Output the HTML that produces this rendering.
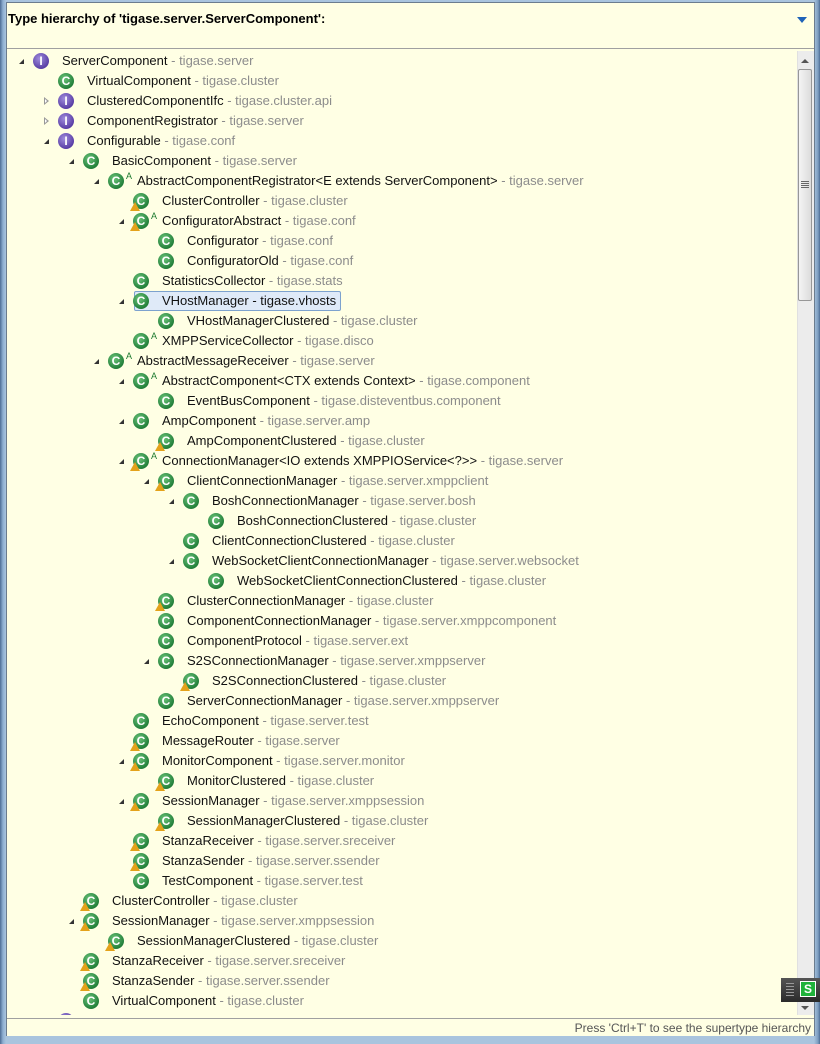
<!DOCTYPE html>
<html><head><meta charset="utf-8"><style>
*{margin:0;padding:0;box-sizing:border-box}
body{width:820px;height:1044px;overflow:hidden;background:#6f8aa8;font-family:"Liberation Sans","DejaVu Sans",sans-serif;position:relative}
#win{position:absolute;left:0;top:0;width:820px;height:1044px;background:linear-gradient(90deg,#4d6d95,#8fb0d2 3px,#a9c4de 6px,#a9c4de 814px,#7d9dc0 818px,#4d6d95);}
#inner{position:absolute;left:6px;top:2px;width:809px;height:1034px;background:#ffffe4;border:1px solid #6b7c8e}
#hdr{position:absolute;left:0;top:0;width:807px;height:46px;border-bottom:1px solid #a0a0a0}
#hdr b{position:absolute;left:1px;top:8px;font-size:13px;color:#000}
#tri{position:absolute;left:790px;top:14px;width:0;height:0;border-left:5px solid transparent;border-right:5px solid transparent;border-top:6px solid #1f63b8}
#status{position:absolute;left:0;top:1015px;width:807px;height:18px;border-top:1px solid #a0a0a0;font-size:12px;color:#555;text-align:right;padding-right:3px;line-height:18px}
#sb{position:absolute;left:797px;top:51px;width:17px;height:964px;background:#ececec;border-left:1px solid #e0e0e0}
#thumb{position:absolute;left:798px;top:69px;width:14px;height:232px;background:linear-gradient(90deg,#f4f4f4,#dcdcdc);border:1px solid #979797;border-radius:2px}
.grip{position:absolute;left:801px;width:8px;height:1px;background:#666}
.up{position:absolute;left:801px;top:59px;border-left:4px solid transparent;border-right:4px solid transparent;border-bottom:4px solid #555}
.dn{position:absolute;left:801px;top:1006px;border-left:4px solid transparent;border-right:4px solid transparent;border-top:4px solid #555}
#tree{position:absolute;left:0;top:1px;width:797px;height:1014px;overflow:hidden}
.r{position:absolute;height:20px;font-size:13px;line-height:20px;white-space:nowrap;color:#111}
.r .t{position:absolute;left:62px;top:0}
.r .p{color:#8c8c8c}
.ic{position:absolute;left:33px;top:2px;width:16px;height:16px;border-radius:50%;color:#fff;font:bold 12px/16px "Liberation Sans",sans-serif;text-align:center}
.c{background:radial-gradient(circle at 40% 35%,#6cc47a,#23803a 70%)}
.c::after{content:"C"}
.i{background:radial-gradient(circle at 40% 35%,#a08ddc,#5a3fa6 70%)}
.i::after{content:"I"}
.w{position:absolute;left:30px;top:11px;width:0;height:0;border-left:5px solid transparent;border-right:5px solid transparent;border-bottom:9px solid #e4a21a}
.a{position:absolute;left:51px;top:-5px;font-size:9px;color:#1d7a2f}
.o{position:absolute;left:19px;top:8px;width:0;height:0;border-left:5px solid transparent;border-bottom:5px solid #333}
.cl{position:absolute;left:19px;top:6px;width:0;height:0;border-top:4px solid transparent;border-bottom:4px solid transparent;border-left:5px solid #999}
.cl::after{content:"";position:absolute;left:-4px;top:-2px;border-top:2px solid transparent;border-bottom:2px solid transparent;border-left:2px solid #fff}
#sel{position:absolute;left:134px;top:290px;width:207px;height:20px;background:#dfeaf8;border:1px solid #7da2ce;border-radius:2px}
#fw{position:absolute;left:781px;top:978px;width:39px;height:24px;background:linear-gradient(#555,#2a2a2a)}
#fw .s{position:absolute;left:19px;top:3px;width:16px;height:16px;background:#1fb23a;border:1px solid #fff;color:#fff;font:bold 12px/14px "Liberation Sans",sans-serif;text-align:center}
#fw .d{position:absolute;left:5px;top:5px;width:8px;height:13px;background:repeating-linear-gradient(#999 0 1px,transparent 1px 3px)}
</style></head><body>
<div id="win"></div>
<div id="inner">
<div id="hdr"><b>Type hierarchy of 'tigase.server.ServerComponent':</b><div id="tri"></div></div>
</div>
<div id="tree">
<div id="sel"></div>
<div class="r" style="top:50px;left:0"><span class="o"></span><span class="ic i"></span><span class="t">ServerComponent <span class="p">- tigase.server</span></span></div>
<div class="r" style="top:70px;left:25px"><span class="ic c"></span><span class="t">VirtualComponent <span class="p">- tigase.cluster</span></span></div>
<div class="r" style="top:90px;left:25px"><span class="cl"></span><span class="ic i"></span><span class="t">ClusteredComponentIfc <span class="p">- tigase.cluster.api</span></span></div>
<div class="r" style="top:110px;left:25px"><span class="cl"></span><span class="ic i"></span><span class="t">ComponentRegistrator <span class="p">- tigase.server</span></span></div>
<div class="r" style="top:130px;left:25px"><span class="o"></span><span class="ic i"></span><span class="t">Configurable <span class="p">- tigase.conf</span></span></div>
<div class="r" style="top:150px;left:50px"><span class="o"></span><span class="ic c"></span><span class="t">BasicComponent <span class="p">- tigase.server</span></span></div>
<div class="r" style="top:170px;left:75px"><span class="o"></span><span class="ic c"></span><span class="a">A</span><span class="t">AbstractComponentRegistrator&lt;E extends ServerComponent&gt; <span class="p">- tigase.server</span></span></div>
<div class="r" style="top:190px;left:100px"><span class="ic c"></span><span class="w"></span><span class="t">ClusterController <span class="p">- tigase.cluster</span></span></div>
<div class="r" style="top:210px;left:100px"><span class="o"></span><span class="ic c"></span><span class="w"></span><span class="a">A</span><span class="t">ConfiguratorAbstract <span class="p">- tigase.conf</span></span></div>
<div class="r" style="top:230px;left:125px"><span class="ic c"></span><span class="t">Configurator <span class="p">- tigase.conf</span></span></div>
<div class="r" style="top:250px;left:125px"><span class="ic c"></span><span class="t">ConfiguratorOld <span class="p">- tigase.conf</span></span></div>
<div class="r" style="top:270px;left:100px"><span class="ic c"></span><span class="t">StatisticsCollector <span class="p">- tigase.stats</span></span></div>
<div class="r" style="top:290px;left:100px"><span class="o"></span><span class="ic c"></span><span class="t">VHostManager - tigase.vhosts</span></div>
<div class="r" style="top:310px;left:125px"><span class="ic c"></span><span class="t">VHostManagerClustered <span class="p">- tigase.cluster</span></span></div>
<div class="r" style="top:330px;left:100px"><span class="ic c"></span><span class="a">A</span><span class="t">XMPPServiceCollector <span class="p">- tigase.disco</span></span></div>
<div class="r" style="top:350px;left:75px"><span class="o"></span><span class="ic c"></span><span class="a">A</span><span class="t">AbstractMessageReceiver <span class="p">- tigase.server</span></span></div>
<div class="r" style="top:370px;left:100px"><span class="o"></span><span class="ic c"></span><span class="a">A</span><span class="t">AbstractComponent&lt;CTX extends Context&gt; <span class="p">- tigase.component</span></span></div>
<div class="r" style="top:390px;left:125px"><span class="ic c"></span><span class="t">EventBusComponent <span class="p">- tigase.disteventbus.component</span></span></div>
<div class="r" style="top:410px;left:100px"><span class="o"></span><span class="ic c"></span><span class="t">AmpComponent <span class="p">- tigase.server.amp</span></span></div>
<div class="r" style="top:430px;left:125px"><span class="ic c"></span><span class="w"></span><span class="t">AmpComponentClustered <span class="p">- tigase.cluster</span></span></div>
<div class="r" style="top:450px;left:100px"><span class="o"></span><span class="ic c"></span><span class="w"></span><span class="a">A</span><span class="t">ConnectionManager&lt;IO extends XMPPIOService&lt;?&gt;&gt; <span class="p">- tigase.server</span></span></div>
<div class="r" style="top:470px;left:125px"><span class="o"></span><span class="ic c"></span><span class="w"></span><span class="t">ClientConnectionManager <span class="p">- tigase.server.xmppclient</span></span></div>
<div class="r" style="top:490px;left:150px"><span class="o"></span><span class="ic c"></span><span class="t">BoshConnectionManager <span class="p">- tigase.server.bosh</span></span></div>
<div class="r" style="top:510px;left:175px"><span class="ic c"></span><span class="t">BoshConnectionClustered <span class="p">- tigase.cluster</span></span></div>
<div class="r" style="top:530px;left:150px"><span class="ic c"></span><span class="t">ClientConnectionClustered <span class="p">- tigase.cluster</span></span></div>
<div class="r" style="top:550px;left:150px"><span class="o"></span><span class="ic c"></span><span class="t">WebSocketClientConnectionManager <span class="p">- tigase.server.websocket</span></span></div>
<div class="r" style="top:570px;left:175px"><span class="ic c"></span><span class="t">WebSocketClientConnectionClustered <span class="p">- tigase.cluster</span></span></div>
<div class="r" style="top:590px;left:125px"><span class="ic c"></span><span class="w"></span><span class="t">ClusterConnectionManager <span class="p">- tigase.cluster</span></span></div>
<div class="r" style="top:610px;left:125px"><span class="ic c"></span><span class="t">ComponentConnectionManager <span class="p">- tigase.server.xmppcomponent</span></span></div>
<div class="r" style="top:630px;left:125px"><span class="ic c"></span><span class="t">ComponentProtocol <span class="p">- tigase.server.ext</span></span></div>
<div class="r" style="top:650px;left:125px"><span class="o"></span><span class="ic c"></span><span class="t">S2SConnectionManager <span class="p">- tigase.server.xmppserver</span></span></div>
<div class="r" style="top:670px;left:150px"><span class="ic c"></span><span class="w"></span><span class="t">S2SConnectionClustered <span class="p">- tigase.cluster</span></span></div>
<div class="r" style="top:690px;left:125px"><span class="ic c"></span><span class="t">ServerConnectionManager <span class="p">- tigase.server.xmppserver</span></span></div>
<div class="r" style="top:710px;left:100px"><span class="ic c"></span><span class="t">EchoComponent <span class="p">- tigase.server.test</span></span></div>
<div class="r" style="top:730px;left:100px"><span class="ic c"></span><span class="w"></span><span class="t">MessageRouter <span class="p">- tigase.server</span></span></div>
<div class="r" style="top:750px;left:100px"><span class="o"></span><span class="ic c"></span><span class="w"></span><span class="t">MonitorComponent <span class="p">- tigase.server.monitor</span></span></div>
<div class="r" style="top:770px;left:125px"><span class="ic c"></span><span class="w"></span><span class="t">MonitorClustered <span class="p">- tigase.cluster</span></span></div>
<div class="r" style="top:790px;left:100px"><span class="o"></span><span class="ic c"></span><span class="w"></span><span class="t">SessionManager <span class="p">- tigase.server.xmppsession</span></span></div>
<div class="r" style="top:810px;left:125px"><span class="ic c"></span><span class="w"></span><span class="t">SessionManagerClustered <span class="p">- tigase.cluster</span></span></div>
<div class="r" style="top:830px;left:100px"><span class="ic c"></span><span class="w"></span><span class="t">StanzaReceiver <span class="p">- tigase.server.sreceiver</span></span></div>
<div class="r" style="top:850px;left:100px"><span class="ic c"></span><span class="w"></span><span class="t">StanzaSender <span class="p">- tigase.server.ssender</span></span></div>
<div class="r" style="top:870px;left:100px"><span class="ic c"></span><span class="t">TestComponent <span class="p">- tigase.server.test</span></span></div>
<div class="r" style="top:890px;left:50px"><span class="ic c"></span><span class="w"></span><span class="t">ClusterController <span class="p">- tigase.cluster</span></span></div>
<div class="r" style="top:910px;left:50px"><span class="o"></span><span class="ic c"></span><span class="w"></span><span class="t">SessionManager <span class="p">- tigase.server.xmppsession</span></span></div>
<div class="r" style="top:930px;left:75px"><span class="ic c"></span><span class="w"></span><span class="t">SessionManagerClustered <span class="p">- tigase.cluster</span></span></div>
<div class="r" style="top:950px;left:50px"><span class="ic c"></span><span class="w"></span><span class="t">StanzaReceiver <span class="p">- tigase.server.sreceiver</span></span></div>
<div class="r" style="top:970px;left:50px"><span class="ic c"></span><span class="w"></span><span class="t">StanzaSender <span class="p">- tigase.server.ssender</span></span></div>
<div class="r" style="top:990px;left:50px"><span class="ic c"></span><span class="t">VirtualComponent <span class="p">- tigase.cluster</span></span></div>
<div class="r" style="top:1010px;left:25px"><span class="cl"></span><span class="ic i"></span><span class="t">MessageReceiver <span class="p">- tigase.server</span></span></div>
</div>
<div id="sb"></div><div class="up"></div><div class="dn"></div>
<div id="thumb"></div>
<div class="grip" style="top:181px"></div><div class="grip" style="top:183px"></div><div class="grip" style="top:185px"></div><div class="grip" style="top:187px"></div>
<div id="status" style="left:7px;top:1018px;position:absolute;width:807px;background:#ffffe4">Press 'Ctrl+T' to see the supertype hierarchy</div>
<div id="fw"><div class="d"></div><div class="s">S</div></div>
</body></html>
